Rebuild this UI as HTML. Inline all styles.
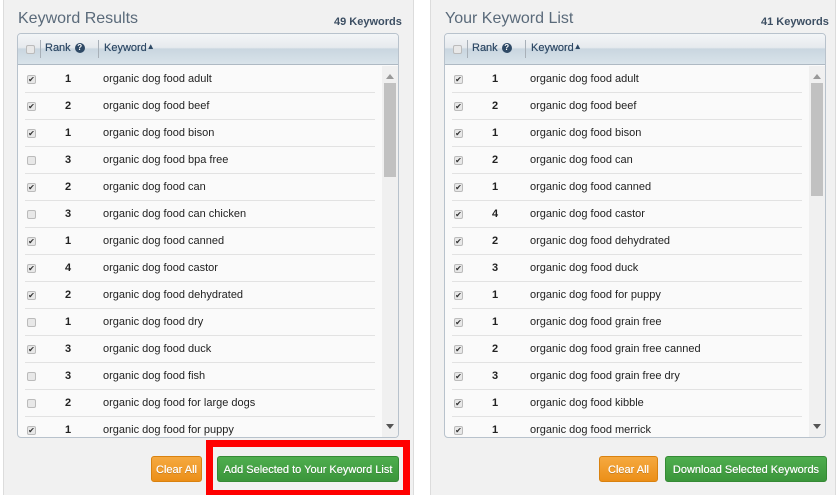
<!DOCTYPE html>
<html><head><meta charset="utf-8"><style>
*{margin:0;padding:0;box-sizing:border-box}
body{width:837px;height:495px;background:#fff;font-family:"Liberation Sans",Arial,sans-serif;position:relative;overflow:hidden}
.panel{position:absolute;top:0;height:495px;background:#f1f1f1;border-left:1px solid #dcdcdc;border-right:1px solid #dcdcdc}
.title{position:absolute;top:10px;font-size:16px;color:#5a6a7a}
.count{position:absolute;top:16px;font-size:11px;font-weight:bold;color:#3d4f63}
.tbl{position:absolute;top:33px;height:405px;border:1px solid #b8c2cc;border-radius:4px;background:#fafafa;overflow:hidden}
.hdr{position:absolute;left:0;right:0;top:0;height:31px;background:linear-gradient(#f3f5f7 0%,#e6eaee 45%,#c9d6e0 50%,#d9e3ea 100%);border-bottom:1px solid #aeb9c3}
.hdr span{position:absolute;top:8px;font-size:11px;color:#2f4a66;text-shadow:0 0 0.4px #2f4a66}
.sep{position:absolute;top:6px;width:1px;height:18px;background:#a8b0b8}
.cb{position:absolute;width:9px;height:9px;border:1px solid #bbb;border-radius:2px;background:#e8e8e8;font-size:8px;line-height:8px;color:#333;text-align:center}
.q{display:inline-block;width:10px;height:10px;border-radius:50%;background:#2f4a66;color:#fff;font-size:8px;line-height:10px;text-align:center;vertical-align:1px;margin-left:4px;font-style:normal;font-weight:bold}
.row{position:absolute;height:27px;border-bottom:1px solid #e2e2e2;font-size:11px;color:#222}
.row .r{position:absolute;top:7px;font-weight:bold;width:20px;text-align:center}
.row .k{position:absolute;top:7px}
.row .cb{top:9px}
.sb{position:absolute;top:32px;width:16px;bottom:0;background:#f0f0f0}
.thumb{position:absolute;left:2px;width:12px;background:#c1c1c1}
.arr{position:absolute;left:4px;width:0;height:0;border-left:4px solid transparent;border-right:4px solid transparent}
.btn{position:absolute;top:456px;height:26px;border-radius:3px;color:#fff;font-size:11px;text-align:center;line-height:26px;white-space:nowrap;text-shadow:0 0 0.5px #fff,0 1px 0 rgba(0,0,0,.2)}
.or{background:linear-gradient(#f5a940,#ec8f18);border:1px solid #d98210}
.gr{background:linear-gradient(#4eae4e,#3b963b);border:1px solid #358a35}
</style></head><body>

<div class="panel" style="left:3px;width:411px"></div>
<div class="panel" style="left:430px;width:406px"></div>

<div class="title" style="left:18px">Keyword Results</div>
<div class="count" style="left:334px">49 Keywords</div>
<div class="title" style="left:445px">Your Keyword List</div>
<div class="count" style="left:761px">41 Keywords</div>

<div class="tbl" style="left:17px;width:382px">
 <div class="hdr"><div class="cb" style="left:8px;top:11px"></div><div class="sep" style="left:22px"></div><span style="left:27px">Rank<i class="q">?</i></span><div class="sep" style="left:80px"></div><span style="left:86px">Keyword<small style="font-size:8px;vertical-align:2px">▲</small></span></div>
 <div class="sb" style="left:364px"><div class="arr" style="top:8px;border-bottom:5px solid #999"></div><div class="thumb" style="top:17px;height:94px"></div><div class="arr" style="bottom:8px;border-top:5px solid #555"></div></div>
 <div id="L"></div>
</div>

<div class="tbl" style="left:444px;width:382px">
 <div class="hdr"><div class="cb" style="left:8px;top:11px"></div><div class="sep" style="left:22px"></div><span style="left:27px">Rank<i class="q">?</i></span><div class="sep" style="left:80px"></div><span style="left:86px">Keyword<small style="font-size:8px;vertical-align:2px">▲</small></span></div>
 <div class="sb" style="left:364px"><div class="arr" style="top:8px;border-bottom:5px solid #999"></div><div class="thumb" style="top:17px;height:113px"></div><div class="arr" style="bottom:8px;border-top:5px solid #555"></div></div>
 <div id="R"></div>
</div>

<div style="position:absolute;left:206px;top:440px;width:204px;height:55px;border:7px solid #f00;border-bottom-width:5px"></div>
<div class="btn or" style="left:151px;width:51px">Clear All</div>
<div class="btn gr" style="left:217px;width:182px">Add Selected to Your Keyword List</div>
<div class="btn or" style="left:599px;width:59px">Clear All</div>
<div class="btn gr" style="left:665px;width:162px">Download Selected Keywords</div>

<script>
function fill(id,data){var h='';data.forEach(function(d,i){h+='<div class="row" style="left:7px;width:350px;top:'+(32+i*27)+'px"><div class="cb" style="left:2px">'+(d[0]?'✔':'')+'</div><div class="r" style="left:33px">'+d[1]+'</div><div class="k" style="left:78px">'+d[2]+'</div></div>'});document.getElementById(id).innerHTML=h}
var p='organic dog food ';
fill('L',[[1,1,p+'adult'],[1,2,p+'beef'],[1,1,p+'bison'],[0,3,p+'bpa free'],[1,2,p+'can'],[0,3,p+'can chicken'],[1,1,p+'canned'],[1,4,p+'castor'],[1,2,p+'dehydrated'],[0,1,p+'dry'],[1,3,p+'duck'],[0,3,p+'fish'],[0,2,p+'for large dogs'],[1,1,p+'for puppy']]);
fill('R',[[1,1,p+'adult'],[1,2,p+'beef'],[1,1,p+'bison'],[1,2,p+'can'],[1,1,p+'canned'],[1,4,p+'castor'],[1,2,p+'dehydrated'],[1,3,p+'duck'],[1,1,p+'for puppy'],[1,1,p+'grain free'],[1,2,p+'grain free canned'],[1,3,p+'grain free dry'],[1,1,p+'kibble'],[1,1,p+'merrick']]);
</script>
</body></html>
